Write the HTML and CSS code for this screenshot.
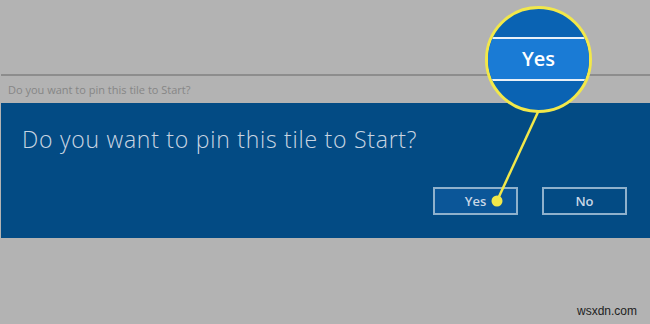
FILE: index.html
```html
<!DOCTYPE html>
<html>

<head>
    <meta charset="UTF-8">
    <title>Pin to Start</title>
    <link rel="stylesheet" href="styles.css">
</head>

<body>
    <div class="top"></div>
    <div class="titlebar">Do you want to pin this tile to Start?</div>
    <div class="dialog">
        <p class="question">Do you want to pin this tile to Start?</p>
        <div class="buttons">
            <button class="btn yes">Yes</button>
            <button class="btn">No</button>
        </div>
    </div>
    <div class="mark">wsxdn.com</div>

    <!-- zoom callout -->
    <div class="callout">
        <div class="band"></div>
        <div class="rule"></div>
        <div class="focus">Yes</div>
        <div class="rule"></div>
        <div class="band"></div>
    </div>
    <svg class="leader" width="650" height="324">
        <line x1="538" y1="112" x2="497" y2="201" stroke="#f2e84a" stroke-width="2.5" />
        <circle cx="497" cy="201" r="5.5" fill="#f2e84a" />
    </svg>
</body>

</html>
```

FILE: styles.css
```css
body {
    margin: 0;
    padding: 0;
    background-color: #b3b3b3;
    font-family: 'Open Sans', sans-serif;
    width: 650px;
    height: 324px;
    position: relative;
    overflow: hidden;
}

.top {
    height: 74px;
    border-bottom: 2px solid #8d8d8d;
    margin-left: 1px;
}

.titlebar {
    height: 27px;
    line-height: 27px;
    padding-left: 8px;
    font-size: 11px;
    color: #868686;
}

.dialog {
    background-color: #034b84;
    height: 135px;
    margin-left: 1px;
    padding: 21px 23px 0 21px;
    box-sizing: border-box;
}

.question {
    margin: 0;
    font-size: 23px;
    font-weight: 300;
    letter-spacing: 0.75px;
    line-height: 30px;
    color: #c9d5e2;
}

.buttons {
    display: flex;
    justify-content: flex-end;
    gap: 24px;
    margin-top: 33px;
}

.btn {
    width: 85px;
    height: 28px;
    border: 2px solid #8fb1cc;
    background-color: #034b84;
    color: #c9d7e6;
    font-family: 'Open Sans', sans-serif;
    font-size: 13px;
    font-weight: 600;
    padding: 0;
}

.btn.yes {
    background-color: #0b5698;
}

.mark {
    position: absolute;
    left: 577px;
    top: 304px;
    font-family: 'Liberation Sans', sans-serif;
    font-size: 12px;
    color: #222;
}

.callout {
    position: absolute;
    left: 485px;
    top: 6px;
    width: 101px;
    height: 101px;
    border: 3px solid #f2e84a;
    border-radius: 50%;
    overflow: hidden;
    background-color: #0a63b3;
    display: flex;
    flex-direction: column;
}

.callout .band {
    height: 28px;
    flex: none;
}

.callout .rule {
    height: 2px;
    background-color: #e8f0f8;
    flex: none;
}

.callout .focus {
    height: 40px;
    flex: none;
    background-color: #1a7bd5;
    color: #fff;
    font-size: 20px;
    font-weight: 600;
    text-align: center;
    line-height: 40px;
}

.leader {
    position: absolute;
    left: 0;
    top: 0;
}
```
